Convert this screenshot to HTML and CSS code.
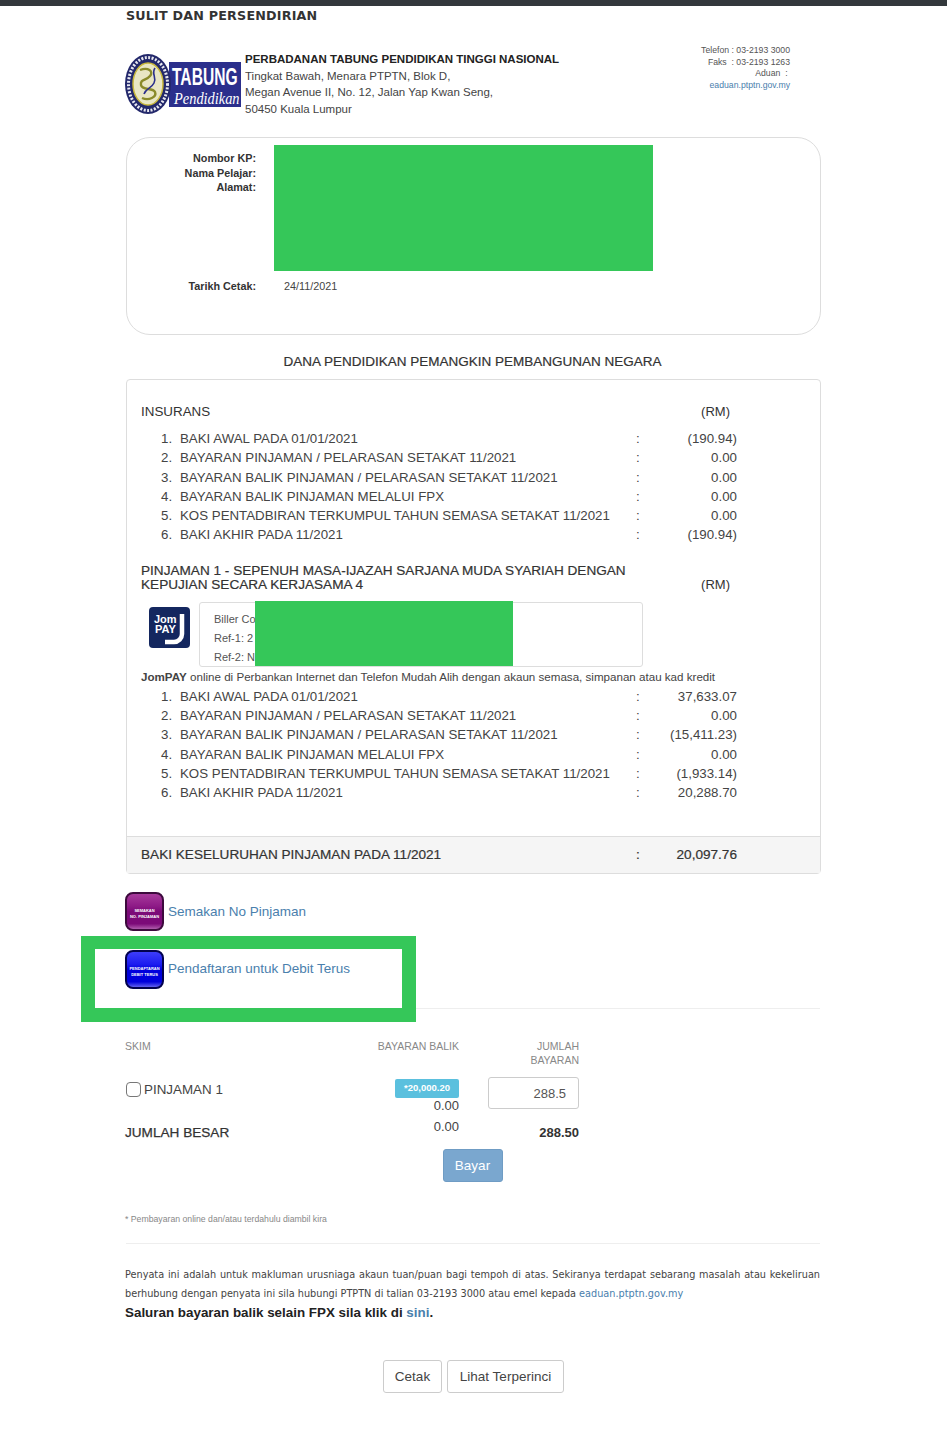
FILE: index.html
```html
<!DOCTYPE html>
<html lang="ms">
<head>
  <meta charset="UTF-8">
  <meta name="viewport" content="width=device-width, initial-scale=1.0">
  <title>Penyata PTPTN</title>
  <link rel="stylesheet" href="styles.css">
</head>
<body>
  <div class="topbar"></div>
  <div class="page">
    <div class="secret">SULIT DAN PERSENDIRIAN</div>

    <div class="head">
      <svg class="logo" width="116" height="62" viewBox="0 0 116 62">
        <rect x="44" y="9" width="72" height="45" fill="#2b2f8c"/>
        <ellipse cx="23" cy="31" rx="23" ry="30" fill="#23286b"/>
        <ellipse cx="23" cy="31" rx="19.5" ry="26.5" fill="none" stroke="#e8e8f0" stroke-width="3" stroke-dasharray="2 1.5"/>
        <ellipse cx="23" cy="31" rx="15" ry="21" fill="#e9e6c4" stroke="#c9b83c" stroke-width="1.5"/>
        <path d="M15 17c8-3 14 1 10 6s-10 3-9 9 12 2 14 7-6 9-13 6" fill="none" stroke="#8a8a2a" stroke-width="2.4"/>
        <path d="M30 15c-4 6 2 9-1 15s-8 5-10 11" fill="none" stroke="#2b2f8c" stroke-width="1.6"/>
        <text transform="translate(47 32) scale(.65 1)" class="logo-big">TABUNG</text>
        <text transform="translate(49 51) scale(.9 1)" class="logo-small">Pendidikan</text>
      </svg>
      <div class="address">
        <b>PERBADANAN TABUNG PENDIDIKAN TINGGI NASIONAL</b><br>
        Tingkat Bawah, Menara PTPTN, Blok D,<br>
        Megan Avenue II, No. 12, Jalan Yap Kwan Seng,<br>
        50450 Kuala Lumpur
      </div>
      <div class="contact">
        Telefon : 03-2193 3000<br>
        Faks &nbsp;: 03-2193 1263<br>
        Aduan &nbsp;:&nbsp;<br>
        <a href="#">eaduan.ptptn.gov.my</a>
      </div>
    </div>

    <div class="student">
      <div class="student-labels">
        <div>Nombor KP:</div>
        <div>Nama Pelajar:</div>
        <div>Alamat:</div>
      </div>
      <div class="student-date"><b>Tarikh Cetak:</b><span>24/11/2021</span></div>
      <div class="redact redact-student"></div>
    </div>

    <h2 class="slogan">DANA PENDIDIKAN PEMANGKIN PEMBANGUNAN NEGARA</h2>

    <div class="panel">
      <div class="panel-body">
        <div class="section-head first">
          <div>INSURANS</div>
          <div class="rm">(RM)</div>
        </div>
        <div class="rows">
          <div class="row"><span>1.</span><span>BAKI AWAL PADA 01/01/2021</span><span>:</span><span>(190.94)</span></div>
          <div class="row"><span>2.</span><span>BAYARAN PINJAMAN / PELARASAN SETAKAT 11/2021</span><span>:</span><span>0.00</span></div>
          <div class="row"><span>3.</span><span>BAYARAN BALIK PINJAMAN / PELARASAN SETAKAT 11/2021</span><span>:</span><span>0.00</span></div>
          <div class="row"><span>4.</span><span>BAYARAN BALIK PINJAMAN MELALUI FPX</span><span>:</span><span>0.00</span></div>
          <div class="row"><span>5.</span><span>KOS PENTADBIRAN TERKUMPUL TAHUN SEMASA SETAKAT 11/2021</span><span>:</span><span>0.00</span></div>
          <div class="row"><span>6.</span><span>BAKI AKHIR PADA 11/2021</span><span>:</span><span>(190.94)</span></div>
        </div>

        <div class="section-head loan">
          <div class="loan-title">PINJAMAN 1 - SEPENUH MASA-IJAZAH SARJANA MUDA SYARIAH DENGAN KEPUJIAN SECARA KERJASAMA 4</div>
          <div class="rm">(RM)</div>
        </div>

        <div class="jompay">
          <svg class="jompay-icon" width="41" height="41" viewBox="0 0 41 41">
            <rect width="41" height="41" rx="4" fill="#14275f"/>
            <text x="5" y="16" class="jom-text">Jom</text>
            <text x="6" y="26" class="jom-text">PAY</text>
            <path d="M33 7v20a8 8 0 0 1-8 8h-9" fill="none" stroke="#fff" stroke-width="4.5"/>
          </svg>
          <div class="biller">
            <div>Biller Code</div>
            <div>Ref-1: 2</div>
            <div>Ref-2: N</div>
            <div class="redact redact-biller"></div>
          </div>
        </div>
        <div class="jompay-note"><b>JomPAY</b> online di Perbankan Internet dan Telefon Mudah Alih dengan akaun semasa, simpanan atau kad kredit</div>

        <div class="rows">
          <div class="row"><span>1.</span><span>BAKI AWAL PADA 01/01/2021</span><span>:</span><span>37,633.07</span></div>
          <div class="row"><span>2.</span><span>BAYARAN PINJAMAN / PELARASAN SETAKAT 11/2021</span><span>:</span><span>0.00</span></div>
          <div class="row"><span>3.</span><span>BAYARAN BALIK PINJAMAN / PELARASAN SETAKAT 11/2021</span><span>:</span><span>(15,411.23)</span></div>
          <div class="row"><span>4.</span><span>BAYARAN BALIK PINJAMAN MELALUI FPX</span><span>:</span><span>0.00</span></div>
          <div class="row"><span>5.</span><span>KOS PENTADBIRAN TERKUMPUL TAHUN SEMASA SETAKAT 11/2021</span><span>:</span><span>(1,933.14)</span></div>
          <div class="row"><span>6.</span><span>BAKI AKHIR PADA 11/2021</span><span>:</span><span>20,288.70</span></div>
        </div>
      </div>
      <div class="panel-foot">
        <span>BAKI KESELURUHAN PINJAMAN PADA 11/2021</span><span>:</span><span>20,097.76</span>
      </div>
    </div>

    <div class="links">
      <div class="link-row">
        <div class="gloss gloss-purple">SEMAKAN<br>NO. PINJAMAN</div>
        <a href="#">Semakan No Pinjaman</a>
      </div>
      <div class="link-row second">
        <div class="gloss gloss-blue">PENDAFTARAN<br>DEBIT TERUS</div>
        <a href="#">Pendaftaran untuk Debit Terus</a>
      </div>
      <div class="green-frame"></div>
    </div>

    <hr class="line line-pay">

    <div class="pay">
      <div class="pay-head">SKIM</div>
      <div class="pay-head right">BAYARAN BALIK</div>
      <div class="pay-head right">JUMLAH<br>BAYARAN</div>

      <label class="scheme"><span class="checkbox"></span>PINJAMAN 1</label>
      <div class="right pay-amount"><span class="badge">*20,000.20</span><div>0.00</div></div>
      <div class="right"><div class="amount-input">288.5</div></div>

      <div class="total">JUMLAH BESAR</div>
      <div class="right total-zero">0.00</div>
      <div class="right total-sum">288.50</div>
    </div>

    <div class="pay-action"><button class="btn-pay">Bayar</button></div>

    <p class="footnote">* Pembayaran online dan/atau terdahulu diambil kira</p>
    <hr class="line line-note">

    <p class="statement">Penyata ini adalah untuk makluman urusniaga akaun tuan/puan bagi tempoh di atas. Sekiranya terdapat sebarang masalah atau kekeliruan berhubung dengan penyata ini sila hubungi PTPTN di talian 03-2193 3000 atau emel kepada <a href="#">eaduan.ptptn.gov.my</a></p>
    <p class="channel">Saluran bayaran balik selain FPX sila klik di <a href="#">sini</a>.</p>

    <div class="actions">
      <button class="btn btn-print">Cetak</button>
      <button class="btn">Lihat Terperinci</button>
    </div>
  </div>
</body>
</html>
```

FILE: styles.css
```css
* {
  box-sizing: border-box;
}

body {
  margin: 0;
  background: #fff;
  color: #333;
  font-family: "Liberation Sans", Arial, sans-serif;
  font-size: 13px;
}

a {
  color: #4a80ad;
  text-decoration: none;
}

.topbar {
  height: 6px;
  background: #33383c;
}

.page {
  width: 695px;
  margin-left: 125px;
}

.secret {
  margin-top: 3px;
  padding-left: 1px;
  font-family: "DejaVu Sans", sans-serif;
  font-weight: bold;
  font-size: 12.7px;
  line-height: 14px;
  letter-spacing: 0.2px;
}

/* header */
.head {
  display: flex;
  margin-top: 24px;
  height: 90px;
}

.logo {
  margin-top: 6px;
  flex-shrink: 0;
}

.logo-big {
  fill: #fff;
  font-family: "Liberation Sans", sans-serif;
  font-weight: bold;
  font-size: 24px;
}

.logo-small {
  fill: #fff;
  font-family: "Liberation Serif", serif;
  font-style: italic;
  font-size: 16px;
}

.address {
  margin-left: 4px;
  padding-top: 4px;
  font-size: 11.5px;
  line-height: 16.6px;
  color: #444;
}

.address b {
  color: #222;
}

.contact {
  margin-left: auto;
  margin-right: 30px;
  margin-top: -2px;
  text-align: right;
  font-size: 8.7px;
  line-height: 11.7px;
  color: #555;
}

/* student card */
.student {
  position: relative;
  width: 695px;
  height: 198px;
  margin-left: 1px;
  border: 1px solid #ddd;
  border-radius: 24px;
  font-size: 10.8px;
  color: #333;
}

.student-labels {
  width: 129px;
  padding-top: 13px;
  text-align: right;
  font-weight: bold;
  line-height: 14.5px;
}

.student-date {
  display: flex;
  margin-top: 84px;
  line-height: 14px;
}

.student-date b {
  width: 129px;
  text-align: right;
}

.student-date span {
  margin-left: 28px;
  color: #444;
}

.redact {
  position: absolute;
  background: #35c759;
}

.redact-student {
  left: 147px;
  top: 7px;
  width: 379px;
  height: 126px;
}

.slogan {
  margin: 19px 0 0;
  text-align: center;
  font-size: 13.5px;
  font-weight: normal;
  line-height: 16px;
  color: #333;
  -webkit-text-stroke: 0.2px #333;
}

/* statement panel */
.panel {
  width: 695px;
  height: 495px;
  margin-top: 9px;
  margin-left: 1px;
  border: 1px solid #ddd;
  border-radius: 4px;
  display: flex;
  flex-direction: column;
}

.panel-body {
  flex: 1;
  padding-left: 14px;
}

.section-head {
  display: flex;
  justify-content: space-between;
  width: 589px;
  font-size: 13.4px;
  color: #333;
}

.section-head.first {
  padding-top: 24px;
  line-height: 16px;
}

.section-head.loan {
  margin-top: 19px;
  align-items: flex-end;
  line-height: 14.5px;
}

.rm {
  flex-shrink: 0;
  font-size: 13px;
}

.loan-title {
  width: 520px;
  font-size: 13.6px;
  -webkit-text-stroke: 0.2px #333;
}

.rows {
  margin-top: 9px;
}

.row {
  display: grid;
  grid-template-columns: 39px 456px 30px 71px;
  height: 19.3px;
  font-size: 13.3px;
  line-height: 19.3px;
  color: #444;
}

.row span:first-child {
  padding-left: 20px;
}

.row span:last-child {
  text-align: right;
}

/* jompay */
.jompay {
  display: flex;
  margin-top: 9px;
  margin-left: 8px;
}

.jompay-icon {
  margin-top: 5px;
  flex-shrink: 0;
}

.jom-text {
  fill: #fff;
  font-family: "Liberation Sans", sans-serif;
  font-weight: bold;
  font-size: 11px;
}

.biller {
  position: relative;
  width: 444px;
  height: 65px;
  margin-left: 9px;
  padding: 7px 14px;
  border: 1px solid #ddd;
  border-radius: 3px;
  font-size: 11px;
  line-height: 19px;
  color: #555;
}

.redact-biller {
  left: 55px;
  top: -2px;
  width: 258px;
  height: 65px;
}

.jompay-note {
  font-size: 11.6px;
  line-height: 14px;
  margin-top: 3px;
  color: #444;
}

.jompay-note + .rows {
  margin-top: 3px;
}

.panel-foot {
  display: grid;
  grid-template-columns: 495px 30px 71px;
  height: 37px;
  padding-left: 14px;
  font-size: 13.6px;
  line-height: 36px;
  background: #f5f5f5;
  border-top: 1px solid #ddd;
  color: #333;
  -webkit-text-stroke: 0.2px #333;
}

.panel-foot span:last-child {
  text-align: right;
}

/* links */
.links {
  position: relative;
  margin-top: 17px;
}

.link-row {
  display: flex;
  align-items: center;
  height: 40px;
}

.link-row a {
  margin-left: 4px;
  margin-top: 1px;
  font-size: 13.5px;
}

.link-row.second {
  margin-top: 18px;
}

.link-row.second a {
  margin-top: -1px;
}

.gloss {
  width: 39px;
  height: 39px;
  border-radius: 8px;
  color: #fff;
  font-size: 4px;
  font-weight: bold;
  line-height: 6px;
  text-align: center;
  padding-top: 14px;
  white-space: nowrap;
  overflow: hidden;
}

.gloss-purple {
  border: 2px solid #3d0a3d;
  background: linear-gradient(#a83a9c 0, #8d1a86 35%, #7c0a78 50%, #7c0a78 85%, #b05cad 100%);
}

.gloss-blue {
  border: 2px solid #02024f;
  background: linear-gradient(#3d3dfb 0, #1c1cf0 35%, #0000dc 50%, #0000dc 85%, #6060f0 100%);
}

.green-frame {
  position: absolute;
  left: -44px;
  top: 45px;
  width: 335px;
  height: 86px;
  border: solid #35c759;
  border-width: 13px 14px 14px;
}

.line {
  border: 0;
  border-top: 1px solid #eee;
  margin: 0 0 0 1px;
}

.line-pay {
  margin-top: 19px;
}

/* payment table */
.pay {
  display: grid;
  width: 454px;
  grid-template-columns: 200px 134px 120px;
  margin-top: 30px;
}

.right {
  text-align: right;
}

.pay-head {
  font-size: 10.5px;
  line-height: 14px;
  color: #888;
  height: 32px;
}

.scheme {
  display: flex;
  align-items: center;
  height: 16px;
  margin-top: 10px;
  font-size: 13.4px;
  color: #444;
}

.checkbox {
  width: 15px;
  height: 15px;
  margin: 0 3px 0 1px;
  border: 1px solid #777;
  border-radius: 4px;
}

.pay-amount {
  margin-top: 8px;
}

.badge {
  display: block;
  width: 64px;
  height: 19px;
  margin-left: auto;
  background: #5bc0de;
  border-radius: 2px;
  color: #fff;
  font-size: 9.5px;
  font-weight: bold;
  line-height: 18px;
  text-align: center;
}

.pay-amount div {
  line-height: 16px;
  color: #444;
}

.amount-input {
  width: 91px;
  height: 32px;
  margin-left: 29px;
  margin-top: 6px;
  padding-right: 12px;
  border: 1px solid #ccc;
  border-radius: 3px;
  line-height: 32px;
  color: #555;
}

.total {
  margin-top: 11px;
  font-size: 13.6px;
  line-height: 16px;
  color: #333;
  -webkit-text-stroke: 0.25px #333;
}

.total-zero {
  margin-top: 5px;
  line-height: 16px;
  color: #444;
}

.total-sum {
  margin-top: 11px;
  font-weight: bold;
  line-height: 16px;
}

.pay-action {
  display: flex;
  justify-content: center;
  margin-top: 8px;
}

.btn-pay {
  width: 60px;
  height: 33px;
  padding: 0;
  background: #7aa7cf;
  border: 1px solid #6f9cc4;
  border-radius: 3px;
  color: #fff;
  font-family: inherit;
  font-size: 13.5px;
}

.footnote {
  margin: 31px 0 0;
  font-size: 8.7px;
  line-height: 12px;
  color: #888;
}

.line-note {
  margin-top: 18px;
}

.statement {
  margin: 21px 0 0;
  font-family: "DejaVu Sans", sans-serif;
  font-size: 9.72px;
  line-height: 19px;
  color: #444;
  text-align: justify;
}

.channel {
  margin: 0;
  font-weight: bold;
  font-size: 13.4px;
  line-height: 19px;
  color: #222;
}

.actions {
  display: flex;
  justify-content: center;
  gap: 5px;
  margin-top: 38px;
  padding-left: 2px;
}

.btn {
  width: 117px;
  height: 33px;
  padding: 0;
  background: #fff;
  border: 1px solid #ccc;
  border-radius: 3px;
  color: #444;
  font-family: inherit;
  font-size: 13.5px;
}

.btn-print {
  width: 59px;
}
```
